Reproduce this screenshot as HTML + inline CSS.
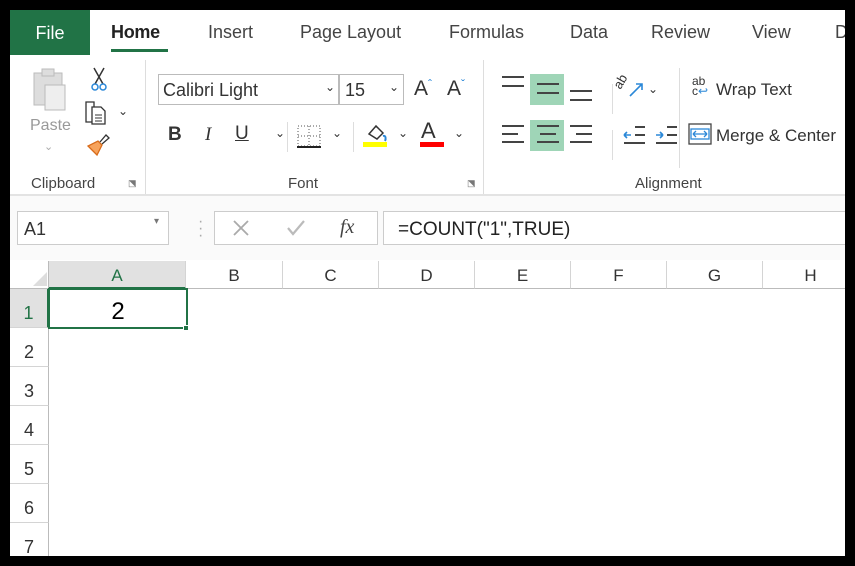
<!DOCTYPE html>
<html><head><meta charset="utf-8"><style>
*{margin:0;padding:0;box-sizing:border-box}
body{width:855px;height:566px;background:#000;overflow:hidden;font-family:"Liberation Sans",sans-serif;position:relative}
#app{position:absolute;left:10px;top:10px;width:835px;height:546px;background:#fff;overflow:hidden}
.a{position:absolute;white-space:nowrap}
.tab{position:absolute;top:12px;font-size:18px;color:#444}
.lbl{font-size:15px;color:#444}
.hdr{position:absolute;top:251px;height:28px;border-right:1px solid #d4d4d4;border-bottom:1px solid #bbb;font-size:17px;color:#333;text-align:center;line-height:30px}
.rh{position:absolute;left:0;width:39px;height:39px;border-bottom:1px solid #d4d4d4;border-right:1px solid #bbb;font-size:18px;color:#333;text-align:center;line-height:48px}
.ln{position:absolute;height:2px;background:#444}
</style></head><body><div id="app">
<div class="a" style="left:0;top:0;width:80px;height:45px;background:#217346;color:#fff;font-size:18px;text-align:center;line-height:46px">File</div>
<div class="tab" style="left:101px;color:#222;font-weight:bold;letter-spacing:-0.3px">Home</div>
<div class="a" style="left:101px;top:39px;width:57px;height:3px;background:#217346"></div>
<div class="tab" style="left:198px">Insert</div>
<div class="tab" style="left:290px">Page Layout</div>
<div class="tab" style="left:439px">Formulas</div>
<div class="tab" style="left:560px">Data</div>
<div class="tab" style="left:641px">Review</div>
<div class="tab" style="left:742px">View</div>
<div class="tab" style="left:825px">D</div>
<svg class="a" style="left:22px;top:55px" width="44" height="50"><rect x="2" y="8" width="28" height="32" fill="#ddd" stroke="#bbb"/><rect x="10" y="4" width="12" height="7" fill="#ddd" stroke="#bbb"/><rect x="13" y="20" width="20" height="25" fill="#eee" stroke="#bbb"/></svg>
<div class="a lbl" style="left:20px;top:107px;color:#999;font-size:16px">Paste</div>
<div class="a" style="left:34px;top:130px;color:#aaa;font-size:11px">⌄</div>
<svg class="a" style="left:78px;top:56px" width="24" height="30"><path d="M6 2L15 18M16 2L7 18" stroke="#333" stroke-width="1.5" fill="none"/><circle cx="7" cy="21" r="3" fill="none" stroke="#2b88d8" stroke-width="1.5"/><circle cx="15" cy="21" r="3" fill="none" stroke="#2b88d8" stroke-width="1.5"/></svg>
<svg class="a" style="left:74px;top:89px" width="26" height="28"><path d="M2 3h8v20H2z" fill="none" stroke="#333" stroke-width="1.3"/><path d="M8 8h9l4 4v13H8z" fill="#fff" stroke="#333" stroke-width="1.3"/><path d="M11 16h7M11 19h7M11 22h7" stroke="#333"/></svg>
<div class="a" style="left:108px;top:94px;font-size:12px;color:#333">⌄</div>
<svg class="a" style="left:74px;top:122px" width="28" height="28"><path d="M4 14l9 9 5-10-4-4z" fill="#f7a35c" stroke="#d86b1a" stroke-width="1.3"/><path d="M16 10l6-7 3 3-7 6" fill="none" stroke="#333" stroke-width="1.3"/></svg>
<div class="a lbl" style="left:21px;top:165px">Clipboard</div>
<div class="a" style="left:118px;top:168px;font-size:9px;color:#777">⬔</div>
<div class="a" style="left:135px;top:50px;width:1px;height:140px;background:#ddd"></div>
<div class="a" style="left:148px;top:64px;width:181px;height:31px;border:1px solid #bbb;font-size:18px;color:#333;padding:5px 4px">Calibri Light<span style="position:absolute;right:3px;top:5px;font-size:12px">⌄</span></div>
<div class="a" style="left:329px;top:64px;width:65px;height:31px;border:1px solid #bbb;font-size:18px;color:#333;padding:5px 5px">15<span style="position:absolute;right:4px;top:5px;font-size:12px">⌄</span></div>
<div class="a" style="left:404px;top:67px;font-size:21px;color:#333">A<span style="font-size:12px;color:#2b88d8;vertical-align:top">ˆ</span></div>
<div class="a" style="left:437px;top:67px;font-size:21px;color:#333">A<span style="font-size:12px;color:#2b88d8;vertical-align:top">ˇ</span></div>
<div class="a" style="left:158px;top:114px;font-size:19px;font-weight:bold;color:#333">B</div>
<div class="a" style="left:195px;top:114px;font-size:19px;font-style:italic;color:#333;font-family:'Liberation Serif'">I</div>
<div class="a" style="left:225px;top:113px;font-size:19px;color:#333;text-decoration:underline">U</div>
<div class="a" style="left:265px;top:116px;font-size:12px;color:#333">⌄</div>
<div class="a" style="left:277px;top:112px;width:1px;height:30px;background:#ddd"></div>
<svg class="a" style="left:286px;top:114px" width="26" height="26"><rect x="2" y="2" width="22" height="20" fill="none" stroke="#555" stroke-dasharray="1 2"/><path d="M13 2v20M2 12h22" stroke="#555" stroke-dasharray="1 2"/><path d="M1 23h24" stroke="#222" stroke-width="2"/></svg>
<div class="a" style="left:322px;top:116px;font-size:12px;color:#333">⌄</div>
<div class="a" style="left:343px;top:112px;width:1px;height:30px;background:#ddd"></div>
<svg class="a" style="left:353px;top:112px" width="30" height="26"><path d="M6 12l7-8 7 7-6 6z" fill="none" stroke="#333" stroke-width="1.5"/><path d="M20 14c3-1 3 3 2 5" stroke="#2b88d8" stroke-width="2" fill="none"/><rect x="0" y="20" width="24" height="5" fill="#ff0"/></svg>
<div class="a" style="left:388px;top:116px;font-size:12px;color:#333">⌄</div>
<div class="a" style="left:411px;top:108px;font-size:22px;color:#333">A</div>
<div class="a" style="left:410px;top:132px;width:24px;height:5px;background:#f00"></div>
<div class="a" style="left:444px;top:116px;font-size:12px;color:#333">⌄</div>
<div class="a lbl" style="left:278px;top:165px">Font</div>
<div class="a" style="left:457px;top:168px;font-size:9px;color:#777">⬔</div>
<div class="a" style="left:473px;top:50px;width:1px;height:140px;background:#ddd"></div>
<div class="a" style="left:520px;top:64px;width:34px;height:31px;background:#9fd5b7"></div>
<div class="a" style="left:520px;top:110px;width:34px;height:31px;background:#9fd5b7"></div>
<div class="ln" style="left:492px;top:66px;width:22px"></div><div class="ln" style="left:492px;top:75px;width:22px"></div>
<div class="ln" style="left:527px;top:73px;width:22px"></div><div class="ln" style="left:527px;top:82px;width:22px"></div>
<div class="ln" style="left:560px;top:80px;width:22px"></div><div class="ln" style="left:560px;top:89px;width:22px"></div>
<div class="ln" style="left:492px;top:115px;width:22px"></div><div class="ln" style="left:492px;top:123px;width:16px"></div><div class="ln" style="left:492px;top:131px;width:22px"></div>
<div class="ln" style="left:527px;top:115px;width:22px"></div><div class="ln" style="left:530px;top:123px;width:16px"></div><div class="ln" style="left:527px;top:131px;width:22px"></div>
<div class="ln" style="left:560px;top:115px;width:22px"></div><div class="ln" style="left:566px;top:123px;width:16px"></div><div class="ln" style="left:560px;top:131px;width:22px"></div>
<div class="a" style="left:602px;top:74px;width:1px;height:30px;background:#ddd"></div>
<div class="a" style="left:602px;top:120px;width:1px;height:30px;background:#ddd"></div>
<div class="a" style="left:603px;top:64px;font-size:13px;color:#333;transform:rotate(-60deg)">ab</div>
<svg class="a" style="left:618px;top:70px" width="16" height="18"><path d="M2 16L14 4M8 4h6v6" stroke="#2b88d8" stroke-width="1.6" fill="none"/></svg>
<div class="a" style="left:638px;top:72px;font-size:12px;color:#333">⌄</div>
<svg class="a" style="left:612px;top:114px" width="60" height="22"><path d="M2 11h7M2 11l3-3M2 11l3 3" stroke="#2b88d8" stroke-width="1.6" fill="none"/><path d="M13 3h10M13 11h10M2 19h21" stroke="#444" stroke-width="2"/><path d="M34 11h7M41 11l-3-3M41 11l-3 3" stroke="#2b88d8" stroke-width="1.6" fill="none"/><path d="M45 3h10M45 11h10M34 19h21" stroke="#444" stroke-width="2"/></svg>
<div class="a" style="left:669px;top:58px;width:1px;height:100px;background:#ddd"></div>
<div class="a" style="left:682px;top:66px;font-size:12px;color:#333;line-height:10px">ab<br>c<span style="color:#2b88d8">↩</span></div>
<div class="a" style="left:706px;top:70px;font-size:17px;color:#333">Wrap Text</div>
<svg class="a" style="left:678px;top:113px" width="24" height="22"><rect x="1" y="1" width="22" height="20" fill="none" stroke="#444" stroke-width="1.3"/><rect x="3" y="6" width="18" height="10" fill="#fff" stroke="#2b88d8" stroke-width="1.3"/><path d="M5 11h14M5 11l3-3M5 11l3 3M19 11l-3-3M19 11l-3 3" stroke="#2b88d8" stroke-width="1.3" fill="none"/></svg>
<div class="a" style="left:706px;top:116px;font-size:17px;color:#333">Merge &amp; Center</div>
<div class="a lbl" style="left:625px;top:165px">Alignment</div>
<div class="a" style="left:0;top:184px;width:835px;height:2px;background:#e3e3e3"></div>
<div class="a" style="left:0;top:186px;width:835px;height:64px;background:#fafafa"></div>
<div class="a" style="left:7px;top:201px;width:152px;height:34px;border:1px solid #ccc;background:#fff;font-size:18px;color:#333;padding:7px 6px">A1<span style="position:absolute;right:9px;top:4px;font-size:10px;color:#777">▾</span></div>
<div class="a" style="left:188px;top:208px;font-size:16px;color:#aaa;line-height:7px">·<br>·<br>·</div>
<div class="a" style="left:204px;top:201px;width:164px;height:34px;border:1px solid #ccc;background:#fff"></div>
<svg class="a" style="left:222px;top:209px" width="18" height="18"><path d="M2 2L16 16M16 2L2 16" stroke="#aaa" stroke-width="1.8"/></svg>
<svg class="a" style="left:276px;top:209px" width="20" height="18"><path d="M2 9l5 6 11-13" stroke="#bbb" stroke-width="2.2" fill="none"/></svg>
<div class="a" style="left:330px;top:206px;font-size:20px;font-style:italic;color:#444;font-family:'Liberation Serif'">fx</div>
<div class="a" style="left:373px;top:201px;width:470px;height:34px;border:1px solid #ccc;background:#fff;font-size:19px;color:#222;padding:7px 0 0 14px">=COUNT("1",TRUE)</div>
<div class="a" style="left:0;top:251px;width:39px;height:28px;border-right:1px solid #bbb;border-bottom:1px solid #bbb;background:#fff"></div>
<svg class="a" style="left:23px;top:262px" width="14" height="14"><path d="M14 0V14H0z" fill="#ddd"/></svg>
<div class="hdr" style="left:39px;width:137px;background:#e1e1e1;color:#217346;border-bottom:2px solid #217346">A</div>
<div class="hdr" style="left:176px;width:97px">B</div>
<div class="hdr" style="left:273px;width:96px">C</div>
<div class="hdr" style="left:369px;width:96px">D</div>
<div class="hdr" style="left:465px;width:96px">E</div>
<div class="hdr" style="left:561px;width:96px">F</div>
<div class="hdr" style="left:657px;width:96px">G</div>
<div class="hdr" style="left:753px;width:96px">H</div>
<div class="rh" style="top:279px;background:#e1e1e1;color:#217346;border-right:2px solid #217346">1</div>
<div class="rh" style="top:318px">2</div>
<div class="rh" style="top:357px">3</div>
<div class="rh" style="top:396px">4</div>
<div class="rh" style="top:435px">5</div>
<div class="rh" style="top:474px">6</div>
<div class="rh" style="top:513px">7</div>
<div class="a" style="left:38px;top:278px;width:140px;height:41px;border:2px solid #217346;font-size:24px;color:#000;text-align:center;line-height:43px">2</div>
<div class="a" style="left:173px;top:315px;width:6px;height:6px;background:#217346;border:1px solid #fff"></div>
</div></body></html>
